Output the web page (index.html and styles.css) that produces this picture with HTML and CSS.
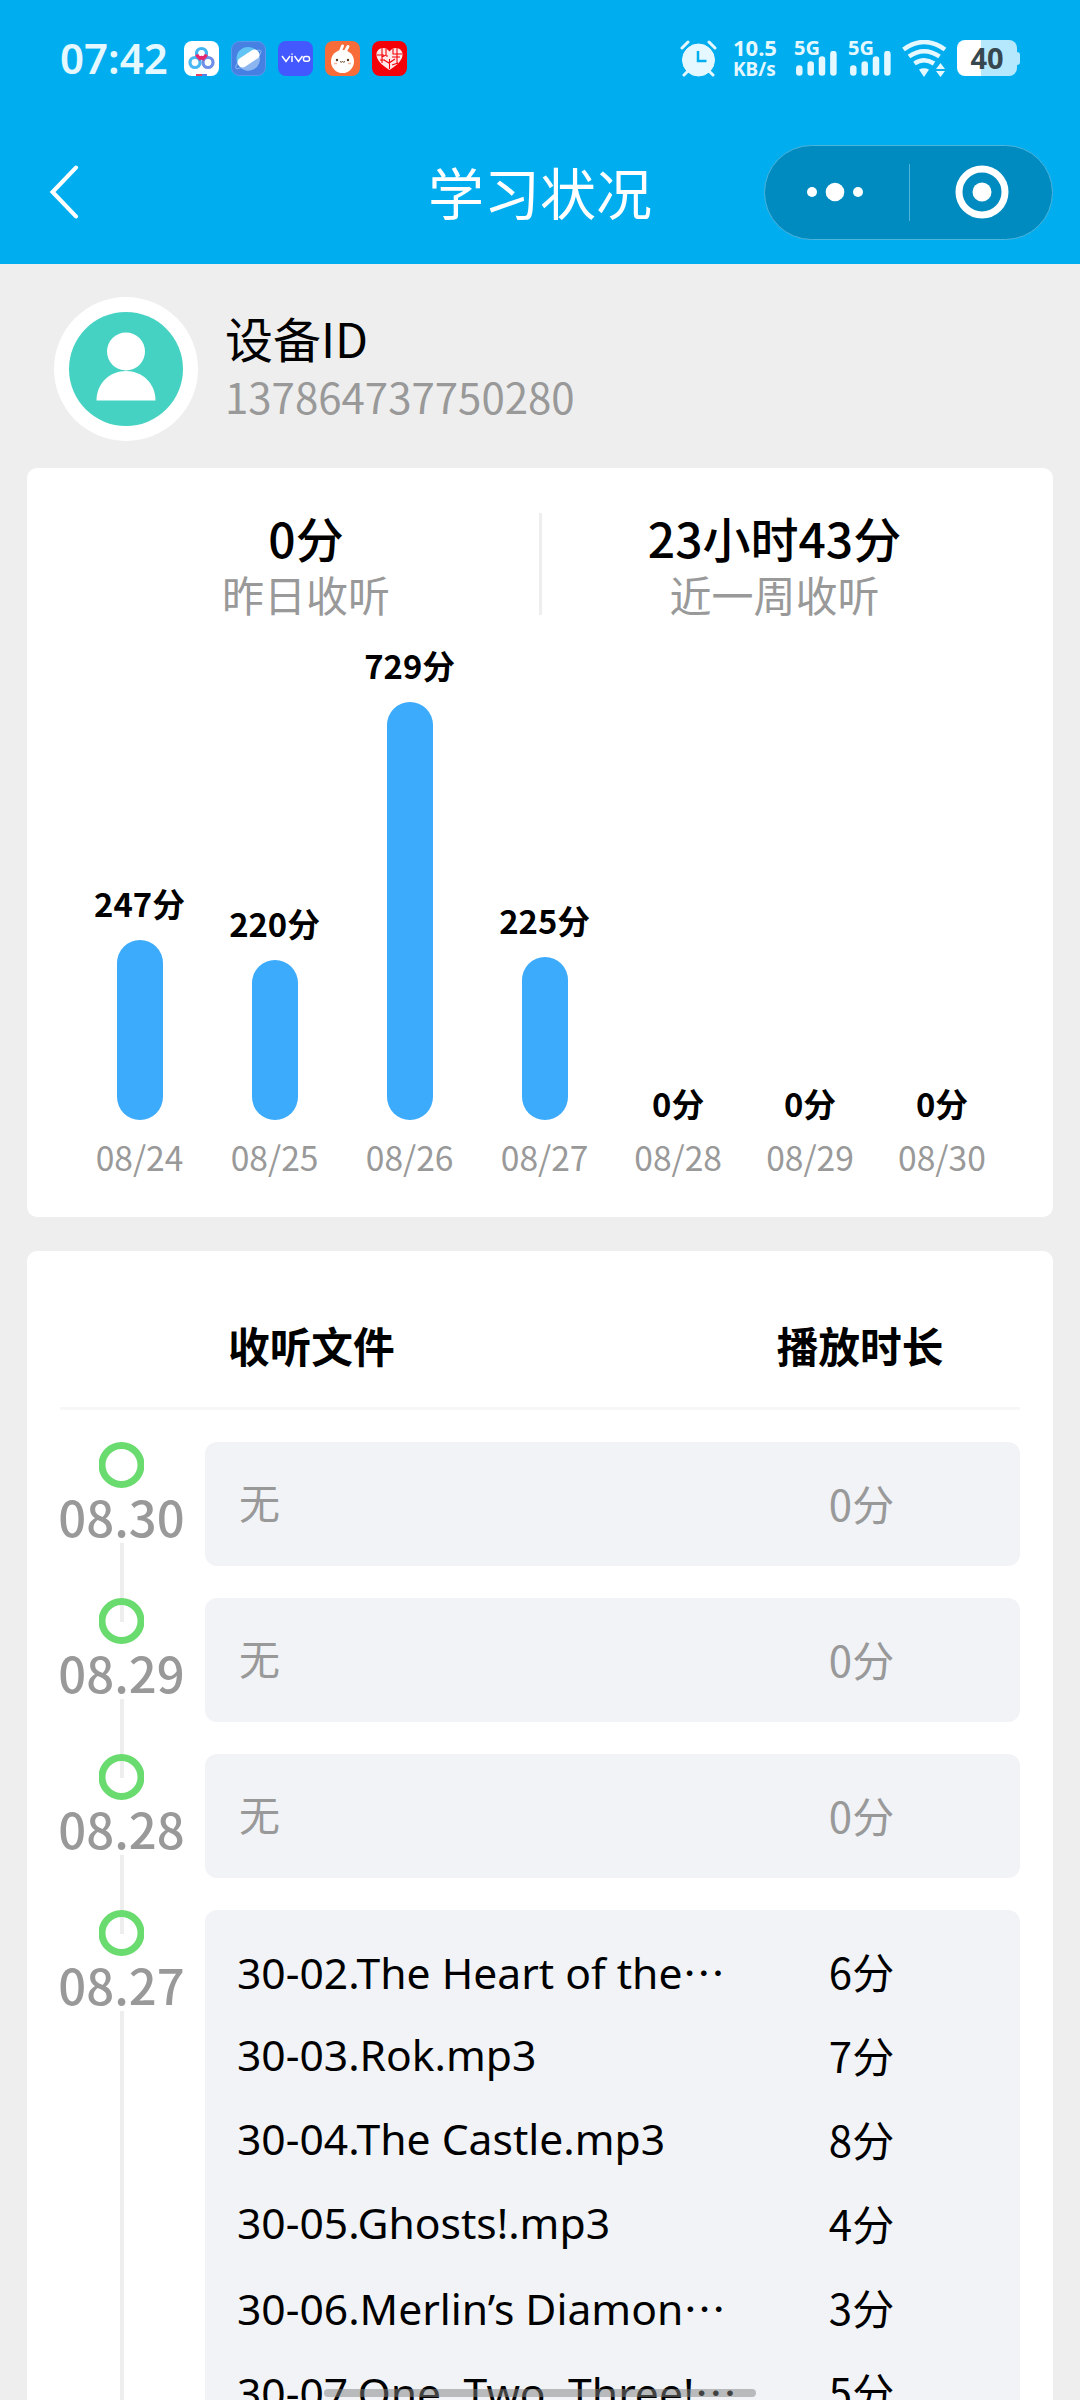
FILE: index.html
```html
<!DOCTYPE html>
<html lang="zh-CN">

<head>
  <meta charset="UTF-8">
  <meta name="viewport" content="width=device-width, initial-scale=1.0">
  <title>学习状况</title>
  <link rel="stylesheet" href="styles.css">
</head>

<body>

  <header class="top">
    <div class="statusBar">
      <span class="time">07:42</span>
      <div class="apps">
        <svg viewBox="0 0 35 35">
          <rect width="35" height="35" rx="8" fill="#fff"/>
          <g fill="none" stroke-width="3.2">
            <circle cx="11" cy="21.5" r="5" stroke="#49b8f2"/>
            <circle cx="24" cy="21.5" r="5" stroke="#6f8fe8"/>
            <circle cx="17.5" cy="12.5" r="5" stroke="#3fb4f0"/>
            <path d="M12.7 13.5a5 5 0 0 0 9.6 0M14.5 18.5l3-2 3 2" stroke="#e5276f"/>
          </g>
          <path d="M12 33h6v2h-6z" fill="#e5405f"/>
          <path d="M18 33h5v2h-5z" fill="#5b7fe0"/>
        </svg>
        <svg viewBox="0 0 35 35">
          <rect x=".5" y=".5" width="34" height="34" rx="8" fill="#4580e2" stroke="#5b97ea"/>
          <circle cx="17" cy="17.5" r="11.5" fill="#62c4f5"/>
          <path d="M28 14a11.5 11.5 0 0 1-20 11z" fill="#8db5f0"/>
          <path d="M25 9.5q5-1 5 1-1 5-8 10T7.5 27.5Q4 28 5 25q1-2 3-4" fill="none" stroke="#7fb0ef" stroke-width="1.2"/>
          <rect x="5.5" y="12.5" width="24" height="10" rx="4.5" fill="#fff" transform="rotate(-34 17.5 17.5)"/>
        </svg>
        <svg viewBox="0 0 35 35">
          <rect width="35" height="35" rx="8" fill="#4358ff"/>
          <g fill="none" stroke="#fff" stroke-width="1.5">
            <path d="M4 15l4 5.5 4-5.5M14 15v6M14 12.5v1.2M16.5 15l4 5.5 4-5.5"/>
            <rect x="25.5" y="15.5" width="6" height="4.8" rx="2"/>
          </g>
        </svg>
        <svg viewBox="0 0 35 35">
          <rect width="35" height="35" rx="8" fill="#f76c38"/>
          <path d="M15.5 10l2-5M20.5 10l2.5-4.5" stroke="#fff" stroke-width="3" stroke-linecap="round"/>
          <circle cx="17.5" cy="20.5" r="11.5" fill="#fff"/>
          <circle cx="12" cy="19" r="1.2" fill="#5a3a20"/>
          <circle cx="23" cy="19" r="1.2" fill="#5a3a20"/>
          <path d="M15 20.5q1.3 1.500 2.500 0 1.200 1.500 2.500 0" fill="none" stroke="#5a3a20"/>
          <path d="M9 22.5h3M23 22.5h3" stroke="#ffb9a0" stroke-width="1.5"/>
        </svg>
        <svg viewBox="0 0 35 35">
          <rect width="35" height="35" rx="8" fill="#f40008"/>
          <path d="M17.5 29C9 23.5 4.5 19 4.5 13.5 4.5 7 13 4.5 17.5 10.5 22 4.5 30.5 7 30.5 13.5 30.5 19 26 23.5 17.5 29z" fill="#ffe9e9"/>
          <path d="M10 7v15M14 8v6l-4 2M21 8v5h9M25 7v16M5 14h7M17.5 18v10M12 19l5 3 6-4M8 19h5M20 24l6-2M14 15h2M20 16h8" fill="none" stroke="#f40008" stroke-width="1.1"/>
        </svg>
      </div>
      <div class="system">
        <svg class="alarm" viewBox="0 0 37 37">
          <circle cx="18.5" cy="20" r="16"/>
          <path d="M2 8l6-6M35 8l-6-6M8 31l-4 4M29 31l4 4" stroke-width="3" stroke-linecap="round"/>
          <path class="hands" d="M18 11v10h8.5"/>
        </svg>
        <div class="speed"><span>10.5</span><span>KB/s</span></div>
        <div class="signal">
          <span>5G</span>
          <svg viewBox="0 0 41 25"><path d="M3.3 17.5v4M14.7 13.5v8M26 8.5v13M37.4 3v18.5"/></svg>
        </div>
        <div class="signal">
          <span>5G</span>
          <svg viewBox="0 0 41 25"><path d="M3.3 17.5v4M14.7 13.5v8M26 8.5v13M37.4 3v18.5"/></svg>
        </div>
        <svg class="wifi" viewBox="0 0 45 37">
          <path class="arc" d="M1.5 9.5Q22 -5.5 43 9.5M7 16.5Q22 6 37.5 16.5M12.5 23.5Q22 17 32 23.5"/>
          <path d="M17 29.500q5-2.500 10 0L22 37zM38.500 23l4.500 6h-9zM38.500 37l4.500-6h-9z"/>
        </svg>
        <div class="battery"><span>40</span></div>
      </div>
    </div>

    <div class="navBar">
      <svg class="back" viewBox="0 0 28 52"><path d="M25.5 2.5L3 26l22.5 23.5"/></svg>
      <h1>学习状况</h1>
      <div class="capsule">
        <svg class="dots" viewBox="0 0 56 20"><circle cx="5" cy="10" r="5"/><circle cx="28" cy="10" r="9.3"/><circle cx="51" cy="10" r="5"/></svg>
        <i></i>
        <svg class="ring" viewBox="0 0 54 54"><circle cx="27" cy="27" r="23" fill="none" stroke="#fff" stroke-width="7"/><circle cx="27" cy="27" r="9.5"/></svg>
      </div>
    </div>
  </header>

  <main>
    <section class="user">
      <svg class="avatar" viewBox="0 0 144 144">
        <circle cx="72" cy="72" r="72" fill="#fff"/>
        <circle cx="72" cy="72" r="57" fill="#45d2c2"/>
        <circle cx="72" cy="54.5" r="19" fill="#fff"/>
        <path d="M42.5 103.5C42.5 86 56 74 72 74s29.5 12 29.5 29.5z" fill="#fff"/>
      </svg>
      <div>
        <p class="userName">设备ID</p>
        <p class="userId">137864737750280</p>
      </div>
    </section>

    <section class="card chartCard">
      <div class="totals">
        <div><strong>0分</strong><span>昨日收听</span></div>
        <div><strong>23小时43分</strong><span>近一周收听</span></div>
      </div>
      <div class="chart">
        <div class="day"><b>247分</b><i style="height:180px"></i><span>08/24</span></div>
        <div class="day"><b>220分</b><i style="height:160px"></i><span>08/25</span></div>
        <div class="day"><b>729分</b><i style="height:418px"></i><span>08/26</span></div>
        <div class="day"><b>225分</b><i style="height:163px"></i><span>08/27</span></div>
        <div class="day empty"><b>0分</b><span>08/28</span></div>
        <div class="day empty"><b>0分</b><span>08/29</span></div>
        <div class="day empty"><b>0分</b><span>08/30</span></div>
      </div>
    </section>

    <section class="card listCard">
      <div class="listHead"><span>收听文件</span><span>播放时长</span></div>

      <div class="record">
        <div class="date"><svg viewBox="0 0 45 46"><circle cx="22.5" cy="23" r="19.5"/></svg><span>08.30</span></div>
        <ul class="files none">
          <li><span>无</span><em>0分</em></li>
        </ul>
      </div>
      <div class="record">
        <div class="date"><svg viewBox="0 0 45 46"><circle cx="22.5" cy="23" r="19.5"/></svg><span>08.29</span></div>
        <ul class="files none">
          <li><span>无</span><em>0分</em></li>
        </ul>
      </div>
      <div class="record">
        <div class="date"><svg viewBox="0 0 45 46"><circle cx="22.5" cy="23" r="19.5"/></svg><span>08.28</span></div>
        <ul class="files none">
          <li><span>无</span><em>0分</em></li>
        </ul>
      </div>
      <div class="record">
        <div class="date"><svg viewBox="0 0 45 46"><circle cx="22.5" cy="23" r="19.5"/></svg><span>08.27</span></div>
        <ul class="files">
          <li><span>30-02.The Heart of the<u>⋯</u></span><em>6分</em></li>
          <li><span>30-03.Rok.mp3</span><em>7分</em></li>
          <li><span>30-04.The Castle.mp3</span><em>8分</em></li>
          <li><span>30-05.Ghosts!.mp3</span><em>4分</em></li>
          <li><span>30-06.Merlin’s Diamon<u>⋯</u></span><em>3分</em></li>
          <li><span>30-07.One, Two, Three!<u>⋯</u></span><em>5分</em></li>
        </ul>
      </div>
    </section>
  </main>

  <div class="homeBar"></div>

</body>

</html>
```
FILE: styles.css
```css
* {
  box-sizing: border-box;
  margin: 0;
  padding: 0;
}

body {
  width: 1080px;
  height: 2400px;
  overflow: hidden;
  background: #eee;
  color: #000;
  font-family: "Noto Sans CJK SC", "Noto Sans", sans-serif;
}

svg {
  display: block;
  flex: none;
}

i, em, u {
  font-style: normal;
  text-decoration: none;
}

/* header */
.top {
  height: 264px;
  background: #00aef0;
  color: #fff;
}

.statusBar {
  height: 116px;
  padding: 0 60px;
  display: flex;
  align-items: center;
}

.time {
  width: 124px;
  font: 600 42px/60px "Noto Sans", sans-serif;
  color: #e6f8ff;
}

.apps {
  display: flex;
  gap: 12px;
}

.apps svg {
  width: 35px;
  height: 35px;
}

.system {
  display: flex;
  align-items: center;
  margin-left: auto;
  height: 36px;
  color: #e6f8ff;
  font-family: "Noto Sans", sans-serif;
  font-weight: 700;
}

.alarm {
  width: 37px;
  height: 37px;
  fill: #e6f8ff;
  stroke: #e6f8ff;
}

.alarm .hands {
  fill: none;
  stroke: #00aef0;
  stroke-width: 2.5;
}

.speed {
  width: 44px;
  margin-left: 16px;
  margin-right: 1px;
  display: flex;
  flex-direction: column;
}

.speed span {
  font-size: 22px;
  line-height: 22px;
  white-space: nowrap;
}

.speed span + span {
  font-size: 19px;
}

.signal {
  position: relative;
  width: 43px;
  height: 36px;
  margin-left: 16px;
}

.signal + .signal {
  margin-left: 11px;
}

.signal span {
  display: block;
  font-size: 20px;
  line-height: 16px;
}

.signal svg {
  position: absolute;
  left: 2px;
  bottom: 0;
  width: 41px;
  height: 25px;
  fill: none;
  stroke: #e6f8ff;
  stroke-width: 6.5;
  stroke-linecap: round;
}

.wifi {
  width: 45px;
  height: 37px;
  margin-left: 11px;
  fill: #e6f8ff;
}

.wifi .arc {
  fill: none;
  stroke: #e6f8ff;
  stroke-width: 4.5;
}

.battery {
  position: relative;
  width: 60px;
  height: 36px;
  margin: 0 3px 0 10px;
  border-radius: 8px;
  background: linear-gradient(90deg, #fff 24px, #b5e8fc 24px);
  color: #37474f;
  font-size: 29px;
  line-height: 36px;
  text-align: center;
}

.battery::after {
  content: "";
  position: absolute;
  right: -3px;
  top: 12px;
  width: 3px;
  height: 13px;
  border-radius: 0 3px 3px 0;
  background: #b5e8fc;
}

.navBar {
  height: 148px;
  padding: 4px 27px 0 49px;
  display: grid;
  grid-template-columns: 290px 1fr 289px;
  align-items: center;
}

.back {
  width: 30px;
  height: 54px;
  fill: none;
  stroke: #fff;
  stroke-width: 4;
  stroke-linecap: round;
}

.navBar h1 {
  padding: 0 23px 2px 0;
  font-size: 56px;
  font-weight: 400;
  text-align: center;
  line-height: 80px;
}

.capsule {
  width: 289px;
  height: 95px;
  padding: 0 43px 0 42px;
  display: flex;
  align-items: center;
  border: 1px solid #4db4dc;
  border-radius: 48px;
  background: #008bc0;
}

.capsule svg {
  fill: #fff;
}

.capsule .dots {
  width: 56px;
  height: 20px;
}

.capsule i {
  width: 1px;
  height: 57px;
  margin: 0 auto;
  background: #4db4dc;
}

.capsule .ring {
  width: 54px;
  height: 54px;
}

/* device info */
.user {
  height: 204px;
  padding: 6px 54px 0;
  display: flex;
  align-items: center;
}

.avatar {
  width: 144px;
  height: 144px;
}

.user > div {
  margin-left: 27px;
  padding-bottom: 8px;
}

.userName {
  font-size: 48px;
  line-height: 60px;
}

.userId {
  font-size: 42px;
  line-height: 57px;
  color: #999;
}

.card {
  margin: 0 27px;
  border-radius: 10px;
  background: #fff;
}

/* weekly chart */
.chartCard {
  height: 749px;
  padding: 45px 45px 0;
}

.totals {
  display: flex;
  height: 102px;
}

.totals div {
  width: 50%;
  display: flex;
  flex-direction: column;
  align-items: center;
}

.totals div + div {
  margin-left: -1px;
  border-left: 3px solid #eee;
}

.totals strong {
  font-size: 48px;
  font-weight: 500;
  line-height: 48px;
}

.totals span {
  font-size: 42px;
  line-height: 66px;
  color: #999;
}

.chart {
  height: 602px;
  display: flex;
  justify-content: space-around;
  align-items: flex-end;
}

.day {
  display: flex;
  flex-direction: column;
  align-items: center;
  font-size: 33.6px;
}

.day b {
  font-size: 32.8px;
  line-height: 50px;
  font-weight: 700;
}

.day i {
  width: 46px;
  margin-top: 12px;
  border-radius: 23px;
  background: #3cabfc;
}

.day span {
  margin: 12px 0 35px;
  line-height: 50px;
  color: #999;
}

.empty span {
  margin-top: 4px;
}

/* daily records */
.listCard {
  margin-top: 34px;
  padding: 0 33px;
  height: 1400px;
}

.listHead {
  height: 159px;
  margin-bottom: 32px;
  padding-top: 32px;
  border-bottom: 3px solid #f7f7f7;
  display: grid;
  grid-template-columns: 640px 320px;
  align-items: center;
  font-size: 41.7px;
  font-weight: 700;
}

.listHead span:first-child {
  padding-left: 168px;
}

.listHead span:last-child {
  text-align: center;
}

.record {
  display: flex;
  justify-content: space-between;
  padding-bottom: 32px;
  position: relative;
}

/* line down to the next circle */
.record::before {
  content: "";
  position: absolute;
  left: 60px;
  top: 101px;
  bottom: -24px;
  width: 4px;
  background: #eee;
}

.date {
  width: 123px;
  display: flex;
  flex-direction: column;
  align-items: center;
  font-size: 49px;
  font-weight: 500;
  color: #999;
}

.date svg {
  width: 45px;
  height: 46px;
  fill: none;
  stroke: #6adb6e;
  stroke-width: 7;
}

.date span {
  line-height: 56px;
}

.files {
  width: 815px;
  padding: 20px 0;
  border-radius: 12px;
  background: #f1f3f7;
  list-style: none;
}

.files li {
  display: grid;
  grid-template-columns: 496px 319px;
  height: 84px;
  line-height: 81px;
  font-size: 42px;
  white-space: nowrap;
}

.files span {
  padding-left: 32px;
  font-family: "Noto Sans", "Noto Sans CJK SC", sans-serif;
  font-size: 42.6px;
}

.files u {
  font-family: "Noto Sans CJK SC", sans-serif;
}

.files em {
  padding-left: 2px;
  text-align: center;
}

.none li {
  color: #999;
}

.none span {
  padding-left: 34px;
  font-size: 41px;
  line-height: 83px;
}

.homeBar {
  position: fixed;
  left: 324px;
  bottom: 3px;
  width: 432px;
  height: 8px;
  border-radius: 4px;
  background: rgba(130, 130, 130, .5);
}
```
